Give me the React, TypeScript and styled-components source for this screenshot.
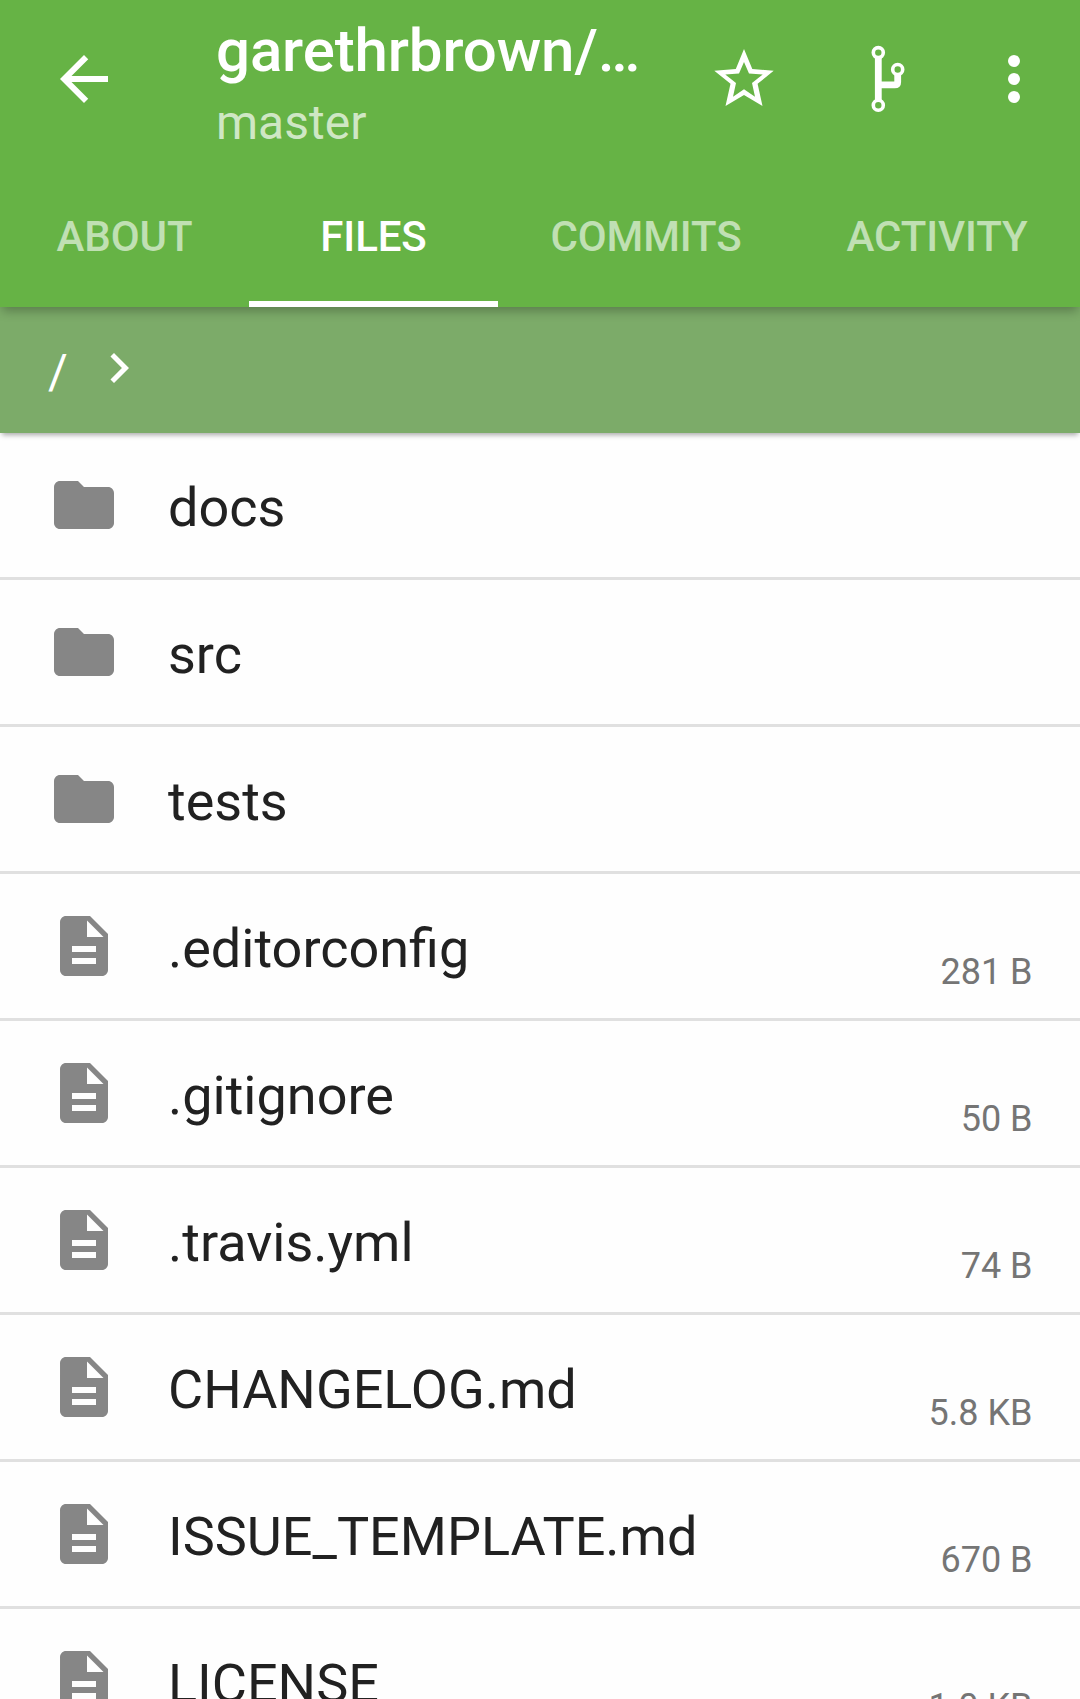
import React from 'react';
import styled, { createGlobalStyle } from 'styled-components';

const GlobalStyle = createGlobalStyle`
  *, *::before, *::after { box-sizing: border-box; }
  body {
    margin: 0;
    background: #fefefe;
    font-family: Roboto, "Noto Sans", sans-serif;
    overflow: hidden;
  }
`;

const Screen = styled.div`
  width: 1080px;
  height: 1699px;
  display: flex;
  flex-direction: column;
  overflow: hidden;
  background: #fefefe;
`;

const AppBar = styled.header`
  position: relative;
  z-index: 2;
  flex: none;
  height: 307px;
  display: flex;
  flex-direction: column;
  justify-content: space-between;
  background: #66b345;
  color: #fff;
  box-shadow: 0 6px 10px -2px rgba(0, 0, 0, 0.27);
`;

const Toolbar = styled.div`
  height: 158px;
  padding-right: 12px;
  display: flex;
  align-items: center;
`;

const IconButton = styled.button<{ $width?: number }>`
  flex: none;
  width: ${({ $width }) => $width ?? 144}px;
  height: 144px;
  padding: 0;
  border: 0;
  background: none;
  color: inherit;
  display: flex;
  align-items: center;
  justify-content: center;
`;

const Titles = styled.div`
  flex: 1;
  min-width: 0;
  height: 158px;
  margin-left: 48px;
  padding-top: 16px;
`;

const Title = styled.h1`
  margin: 0;
  font-size: 60px;
  font-weight: 500;
  letter-spacing: -0.12px;
  line-height: 70px;
  white-space: nowrap;
`;

const Subtitle = styled.p`
  margin: 9px 0 0;
  font-size: 48px;
  line-height: 56px;
  color: rgba(255, 255, 255, 0.7);
`;

const Tabs = styled.nav`
  height: 144px;
  display: grid;
  grid-template-columns: 249px 249px 296px 286px;
`;

const Tab = styled.button<{ $active?: boolean }>`
  padding: 49px 0 0;
  border: 0;
  border-bottom: 6px solid ${({ $active }) => ($active ? '#fff' : 'transparent')};
  background: none;
  display: flex;
  align-items: flex-start;
  justify-content: center;
  font-family: inherit;
  font-size: 42px;
  font-weight: 500;
  letter-spacing: -0.1px;
  line-height: 50px;
  color: ${({ $active }) => ($active ? '#fff' : 'rgba(255, 255, 255, 0.6)')};
`;

const Breadcrumbs = styled.div`
  position: relative;
  z-index: 1;
  flex: none;
  height: 126px;
  padding-left: 48px;
  padding-bottom: 5px;
  display: flex;
  align-items: center;
  background: #7cab69;
  color: #fff;
  box-shadow: 0 4px 5px -2px rgba(0, 0, 0, 0.34);
`;

const Crumb = styled.span`
  width: 41px;
  padding-top: 8px;
  font-size: 48px;
  line-height: 56px;
`;

const FileList = styled.ul`
  margin: 0;
  padding: 0;
  list-style: none;
`;

const Row = styled.li`
  height: 147px;
  padding: 0 47.5px 0 48px;
  border-bottom: 3px solid #e0e0e0;
  display: flex;
  align-items: center;
  color: #868686;
`;

const FileName = styled.span`
  flex: 1;
  margin-left: 48px;
  font-size: 54px;
  line-height: 64px;
  padding-top: 6px;
  color: #212121;
`;

const FileSize = styled.span`
  align-self: flex-end;
  font-size: 36px;
  line-height: 42px;
  margin-bottom: 25px;
  color: #757575;
`;

const Glyph = styled.svg<{ $size?: number }>`
  flex: none;
  display: block;
  width: ${({ $size }) => $size ?? 72}px;
  height: ${({ $size }) => $size ?? 72}px;
  fill: currentColor;
`;

const FolderIcon = () => (
  <Glyph viewBox="0 0 24 24">
    <path d="M10 4H4c-1.1 0-1.99.9-1.99 2L2 18c0 1.1.9 2 2 2h16c1.1 0 2-.9 2-2V8c0-1.1-.9-2-2-2h-8l-2-2z" />
  </Glyph>
);

const DocumentIcon = () => (
  <Glyph viewBox="0 0 24 24">
    <path d="M14 2H6c-1.1 0-1.99.9-1.99 2L4 20c0 1.1.89 2 1.99 2H18c1.1 0 2-.9 2-2V8l-6-6zm2 16H8v-2h8v2zm0-4H8v-2h8v2zm-3-5V3.5L18.5 9H13z" />
  </Glyph>
);

const BackIcon = () => (
  <Glyph viewBox="0 0 24 24">
    <path d="M20 11H7.83l5.59-5.59L12 4l-8 8 8 8 1.41-1.41L7.83 13H20v-2z" />
  </Glyph>
);

const StarIcon = () => (
  <Glyph viewBox="0 0 72 72">
    <path
      fillRule="evenodd"
      d="M36 6l8.3 20L65.7 27.8 49.6 40.8 54.5 63 36 52 17.5 63l5-22.2L6.3 27.8l21.5-1.8zM36 19l-5 11.4-13.7 1 10.7 8.6-3 13.8L36 46.3l11 7.5-3-13.8 10.7-8.6-13.7-1z"
    />
  </Glyph>
);

const BranchIcon = () => (
  <Glyph viewBox="0 0 72 72">
    <g fill="none" stroke="currentColor">
      <circle cx="26.3" cy="9.6" r="5" strokeWidth="3.6" />
      <circle cx="26.3" cy="62.3" r="5" strokeWidth="3.6" />
      <circle cx="45.7" cy="26.5" r="5" strokeWidth="3.6" />
      <path d="M26.3 14v43.5M26.3 41.9h16.4q3 0 3-3V31.5" strokeWidth="6.8" />
    </g>
  </Glyph>
);

const MoreIcon = () => (
  <Glyph viewBox="0 0 24 24">
    <circle cx="12" cy="6" r="2" />
    <circle cx="12" cy="12" r="2" />
    <circle cx="12" cy="18" r="2" />
  </Glyph>
);

const ChevronIcon = () => (
  <Glyph $size={60} viewBox="0 0 24 24">
    <path d="M10 6L8.59 7.41 13.17 12l-4.58 4.59L10 18l6-6z" />
  </Glyph>
);

const tabs = ['ABOUT', 'FILES', 'COMMITS', 'ACTIVITY'];

const entries: { name: string; size?: string }[] = [
  { name: 'docs' },
  { name: 'src' },
  { name: 'tests' },
  { name: '.editorconfig', size: '281 B' },
  { name: '.gitignore', size: '50 B' },
  { name: '.travis.yml', size: '74 B' },
  { name: 'CHANGELOG.md', size: '5.8 KB' },
  { name: 'ISSUE_TEMPLATE.md', size: '670 B' },
  { name: 'LICENSE', size: '1.0 KB' },
];

export default function App() {
  return (
    <>
      <GlobalStyle />
      <Screen>
        <AppBar>
          <Toolbar>
            <IconButton $width={168} aria-label="Back"><BackIcon /></IconButton>
            <Titles>
              <Title>garethrbrown/…</Title>
              <Subtitle>master</Subtitle>
            </Titles>
            <IconButton aria-label="Star"><StarIcon /></IconButton>
            <IconButton aria-label="Branch"><BranchIcon /></IconButton>
            <IconButton $width={108} aria-label="More"><MoreIcon /></IconButton>
          </Toolbar>
          <Tabs>
            {tabs.map((label) => (
              <Tab key={label} $active={label === 'FILES'}>{label}</Tab>
            ))}
          </Tabs>
        </AppBar>
        <Breadcrumbs>
          <Crumb>/</Crumb>
          <ChevronIcon />
        </Breadcrumbs>
        <FileList>
          {entries.map(({ name, size }) => (
            <Row key={name}>
              {size ? <DocumentIcon /> : <FolderIcon />}
              <FileName>{name}</FileName>
              {size && <FileSize>{size}</FileSize>}
            </Row>
          ))}
        </FileList>
      </Screen>
    </>
  );
}
